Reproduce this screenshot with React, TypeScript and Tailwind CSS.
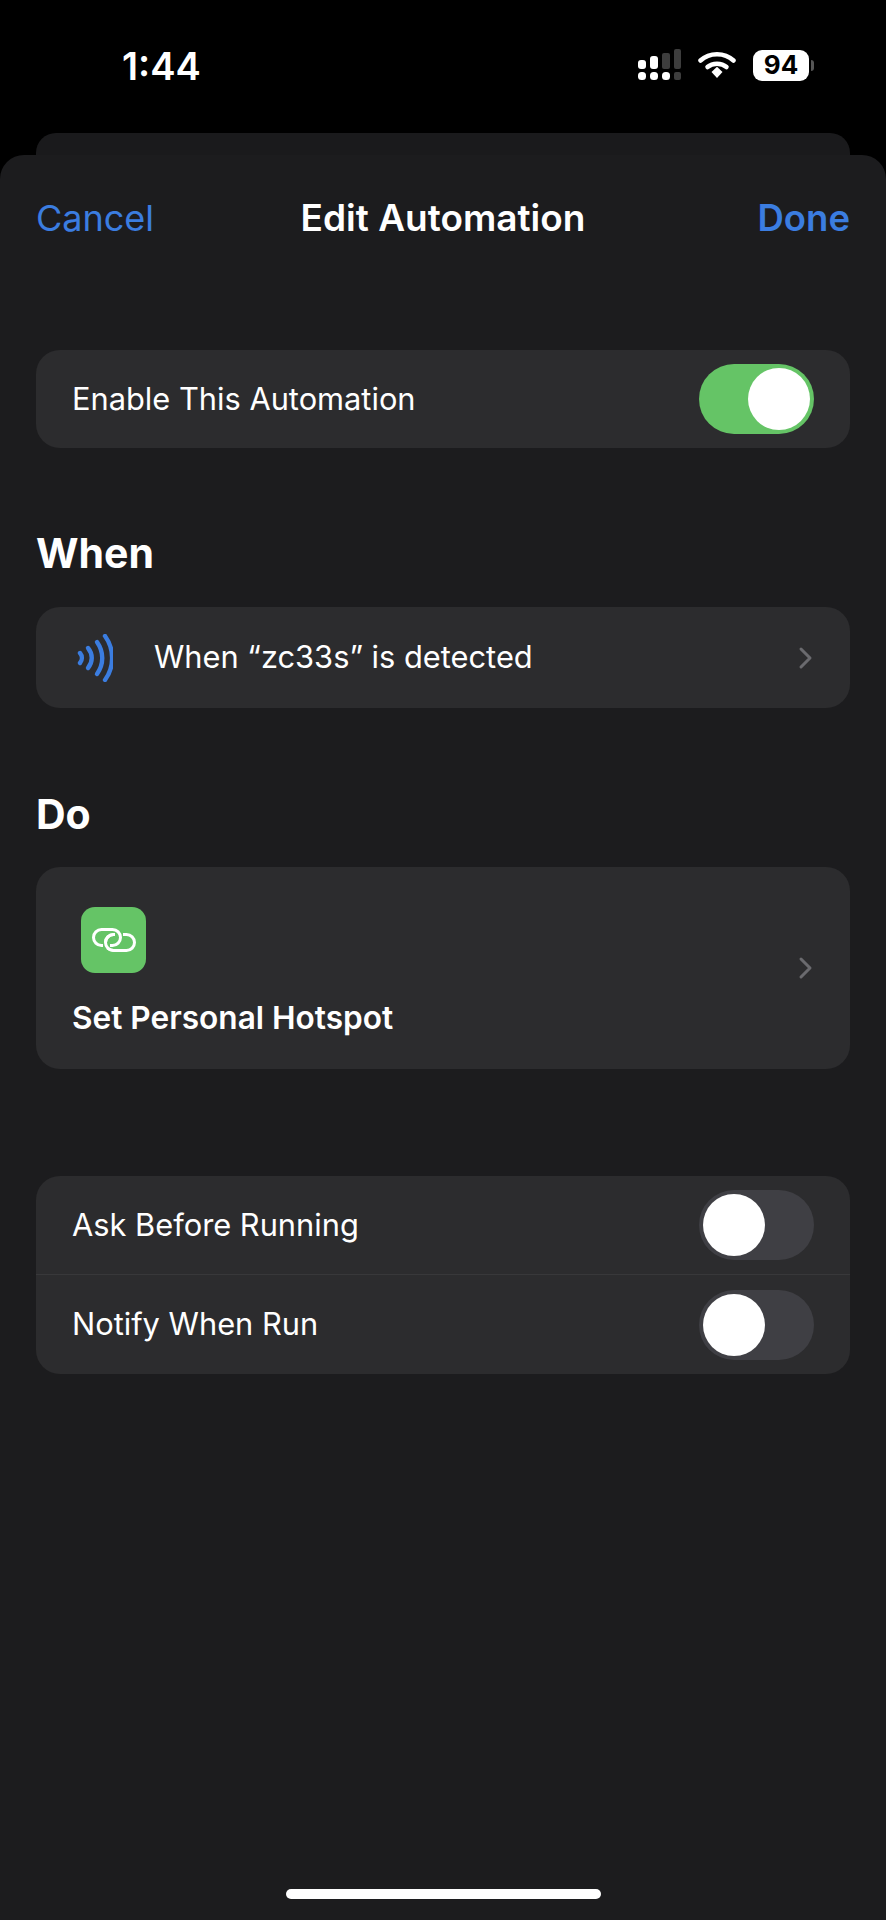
const font = "font-['Inter','Noto_Sans',sans-serif]";

function Toggle({ on }: { on?: boolean }) {
  return (
    <div
      className={`flex h-[70px] w-[115px] shrink-0 items-center rounded-full px-[4px] ${
        on ? "justify-end bg-[#65c466]" : "justify-start bg-[#3f3f44]"
      }`}
    >
      <div className="h-[62px] w-[62px] rounded-full bg-white" />
    </div>
  );
}

function Chevron() {
  return (
    <svg width="16" height="24" viewBox="0 0 16 24" fill="none" className="shrink-0">
      <path d="M3 3l9 9-9 9" stroke="#6a6a6e" strokeWidth="3" strokeLinecap="round" strokeLinejoin="round" />
    </svg>
  );
}

function StatusBar() {
  return (
    <div className="flex h-[133px] items-start justify-between bg-black pl-[122px] pr-[72px] pt-[42px] text-white">
      <span className="text-[38px] font-semibold leading-[48px]">1:44</span>
      <div className="mt-[7px] flex items-center gap-[17px]">
        <svg width="44" height="32" viewBox="0 0 44 32">
          <rect x="1" y="11" width="8" height="9" rx="3" fill="#fff" />
          <rect x="1" y="23" width="8" height="8" rx="3.500" fill="#fff" />
          <rect x="13" y="7" width="8" height="13" rx="3" fill="#fff" />
          <rect x="13" y="23" width="8" height="8" rx="3.500" fill="#fff" />
          <rect x="25" y="4" width="8" height="16" rx="2" fill="#3d3d3d" />
          <rect x="25" y="23" width="8" height="8" rx="3.500" fill="#fff" />
          <rect x="37" y="0" width="7" height="20" rx="2" fill="#3d3d3d" />
          <rect x="37" y="23" width="7" height="8" rx="2" fill="#3d3d3d" />
        </svg>
        <svg width="38" height="30" viewBox="0 0 38 30" fill="none">
          <path d="M2.500 10.500C11.500 2 26.500 2 35.500 10.500" stroke="#fff" strokeWidth="4.500" strokeLinecap="round" />
          <path d="M9.500 17C14.500 12.500 23.500 12.500 28.500 17" stroke="#fff" strokeWidth="4.500" strokeLinecap="round" />
          <path d="M13.500 22L19 16.800 24.500 22 19 28z" fill="#fff" />
        </svg>
        <div className="flex items-center gap-[2px]">
          <div className="flex h-[31px] w-[56px] items-center justify-center rounded-[9px] bg-white text-[26px] font-bold leading-none text-black">
            94
          </div>
          <div className="h-[11px] w-[3px] rounded-r-full bg-[#555]" />
        </div>
      </div>
    </div>
  );
}

export default function App() {
  return (
    <div className={`flex min-h-screen flex-col bg-black ${font}`}>
      <StatusBar />
      <div className="mx-[36px] h-[22px] rounded-t-[20px] bg-[#1a1a1c]" />
      <div className="flex flex-1 flex-col rounded-t-[24px] bg-[#1c1c1e] px-[36px] text-white">
        <div className="flex h-[128px] items-start justify-between pt-[40px] text-[37px] leading-[46px]">
          <span className="w-[150px] text-[36px] text-[#3b7de0]">Cancel</span>
          <span className="font-semibold">Edit Automation</span>
          <span className="w-[150px] text-right text-[36.500px] font-semibold text-[#3b7de0]">Done</span>
        </div>

        <div className="mt-[67px] flex h-[98px] items-center justify-between rounded-[24px] bg-[#2c2c2e] px-[36px] text-[30.800px]">
          <span>Enable This Automation</span>
          <Toggle on />
        </div>

        <h2 className="mt-[81px] text-[41px] font-bold leading-[48px]">When</h2>
        <div className="mt-[30px] flex h-[101px] items-center justify-between rounded-[24px] bg-[#2c2c2e] pl-[41px] pr-[36px] text-[30.800px]">
          <div className="flex items-center gap-[41px]">
            <svg width="36" height="48" viewBox="0 0 36 48" fill="none" stroke="#3b7de0" strokeLinecap="round" strokeWidth="4.400">
              <path d="M3 19c2.500 3 2.500 7 0 10" />
              <path d="M11 14c5 6 5 14 0 20" />
              <path d="M20 8c7 10 7 22 0 32" />
              <path d="M28 2c9.500 13 9.500 31 0 44" />
            </svg>
            <span>When “zc33s” is detected</span>
          </div>
          <Chevron />
        </div>

        <h2 className="mt-[82px] text-[41px] font-bold leading-[48px]">Do</h2>
        <div className="mt-[29px] flex h-[202px] items-center justify-between rounded-[24px] bg-[#2c2c2e] px-[36px]">
          <div className="flex flex-col">
            <div className="ml-[9px] mt-[9px] flex h-[66px] w-[65px] items-center justify-center rounded-[14px] bg-[#65c466]">
              <svg width="44" height="24" viewBox="0 0 44 24" fill="none" stroke="#fff" strokeWidth="3">
                <rect x="13.500" y="6.500" width="29" height="16" rx="8" />
                <path d="M23 6.500h8" stroke="#65c466" strokeWidth="7" />
                <rect x="1.500" y="1.500" width="27" height="16" rx="8" />
                <path d="M11 17.500h7" stroke="#65c466" strokeWidth="7" />
                <path d="M21.500 6.500a8 8 0 0 0 0 16" />
              </svg>
            </div>
            <span className="mt-[25px] text-[31.600px] font-semibold leading-[40px]">Set Personal Hotspot</span>
          </div>
          <Chevron />
        </div>

        <div className="mt-[107px] flex flex-col rounded-[24px] bg-[#2c2c2e] text-[30.800px]">
          <div className="flex h-[99px] items-center justify-between border-b border-[#38383a] px-[36px]">
            <span>Ask Before Running</span>
            <Toggle />
          </div>
          <div className="flex h-[99px] items-center justify-between px-[36px]">
            <span>Notify When Run</span>
            <Toggle />
          </div>
        </div>

        <div className="mt-auto flex justify-center pb-[21px]">
          <div className="h-[10px] w-[315px] rounded-full bg-white" />
        </div>
      </div>
    </div>
  );
}
